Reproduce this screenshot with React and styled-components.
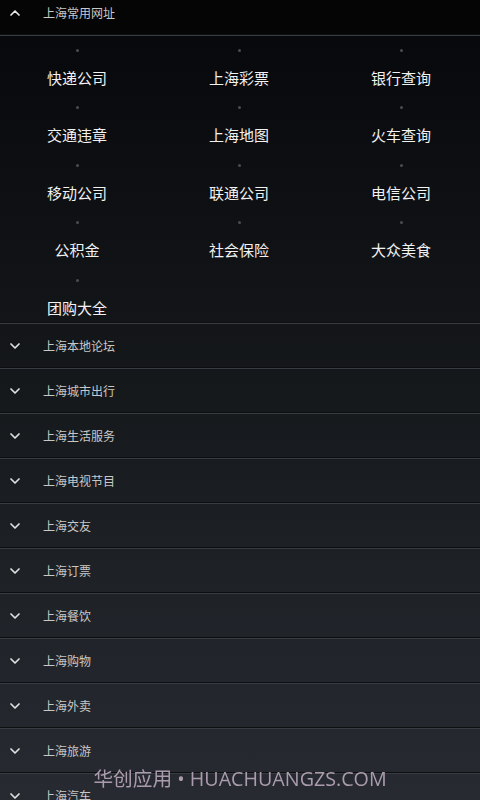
import React from "react";
import styled, { createGlobalStyle } from "styled-components";

const GlobalStyle = createGlobalStyle`
  html, body {
    margin: 0;
    padding: 0;
    height: 800px;
    overflow: hidden;
  }
  body {
    background: linear-gradient(180deg, #06070a 0%, #0c0e11 20%, #16191c 50%, #1f2227 75%, #272a31 100%);
    font-family: "Noto Sans CJK SC", "Noto Sans", sans-serif;
  }
`;

const Page = styled.div`
  margin-top: -9px;
  display: flex;
  flex-direction: column;
`;

const Row = styled.div`
  box-sizing: border-box;
  height: 45px;
  display: flex;
  align-items: center;
  padding-left: 10px;
  border-bottom: 1px solid #393c42;
  box-shadow: inset 0 -1px 0 #0d0e10;
  background: ${(p) => (p.$open ? "#050506" : "transparent")};
`;

const Chevron = styled.svg`
  width: 10px;
  height: 6px;
  flex: none;
`;

const RowLabel = styled.span`
  margin-left: 23px;
  font-size: 12px;
  color: #c8c8c8;
  line-height: 16px;
`;

const Grid = styled.div`
  box-sizing: border-box;
  height: 288px;
  display: grid;
  grid-template-columns: repeat(3, 162px);
  grid-auto-rows: 57.4px;
  margin-left: -4px;
  margin-right: -2px;
  border-bottom: 1px solid #393c42;
  box-shadow: inset 0 -1px 0 #0d0e10;
`;

const Cell = styled.div`
  display: flex;
  flex-direction: column;
  align-items: center;
  padding-top: 13px;
`;

const Dot = styled.span`
  width: 3px;
  height: 3px;
  border-radius: 50%;
  background: #4a4d52;
  margin-bottom: 16px;
`;

const CellText = styled.span`
  font-size: 15px;
  line-height: 20px;
  color: #f2f2f2;
`;

const Watermark = styled.div`
  position: fixed;
  left: 0;
  right: 0;
  bottom: 8px;
  text-align: center;
  font-family: "Open Sans", "Noto Sans CJK SC", sans-serif;
  font-size: 19.7px;
  line-height: 26px;
  color: #ab9cad;
`;

const Down = () => (
  <Chevron viewBox="0 0 10 6">
    <polyline points="1,1 5,5 9,1" fill="none" stroke="#e0e0e0" strokeWidth="1.7" strokeLinecap="round" strokeLinejoin="round" />
  </Chevron>
);

const Up = () => (
  <Chevron viewBox="0 0 10 6">
    <polyline points="1,5 5,1 9,5" fill="none" stroke="#e8e8e8" strokeWidth="1.7" strokeLinecap="round" strokeLinejoin="round" />
  </Chevron>
);

const links = [
  "快递公司", "上海彩票", "银行查询",
  "交通违章", "上海地图", "火车查询",
  "移动公司", "联通公司", "电信公司",
  "公积金", "社会保险", "大众美食",
  "团购大全",
];

const sections = [
  "上海本地论坛", "上海城市出行", "上海生活服务", "上海电视节目", "上海交友",
  "上海订票", "上海餐饮", "上海购物", "上海外卖", "上海旅游", "上海汽车",
];

export default function App() {
  return (
    <>
      <GlobalStyle />
      <Page>
        <Row $open>
          <Up />
          <RowLabel>上海常用网址</RowLabel>
        </Row>
        <Grid>
          {links.map((l) => (
            <Cell key={l}>
              <Dot />
              <CellText>{l}</CellText>
            </Cell>
          ))}
        </Grid>
        {sections.map((s) => (
          <Row key={s}>
            <Down />
            <RowLabel>{s}</RowLabel>
          </Row>
        ))}
      </Page>
      <Watermark>华创应用 • HUACHUANGZS.COM</Watermark>
    </>
  );
}
